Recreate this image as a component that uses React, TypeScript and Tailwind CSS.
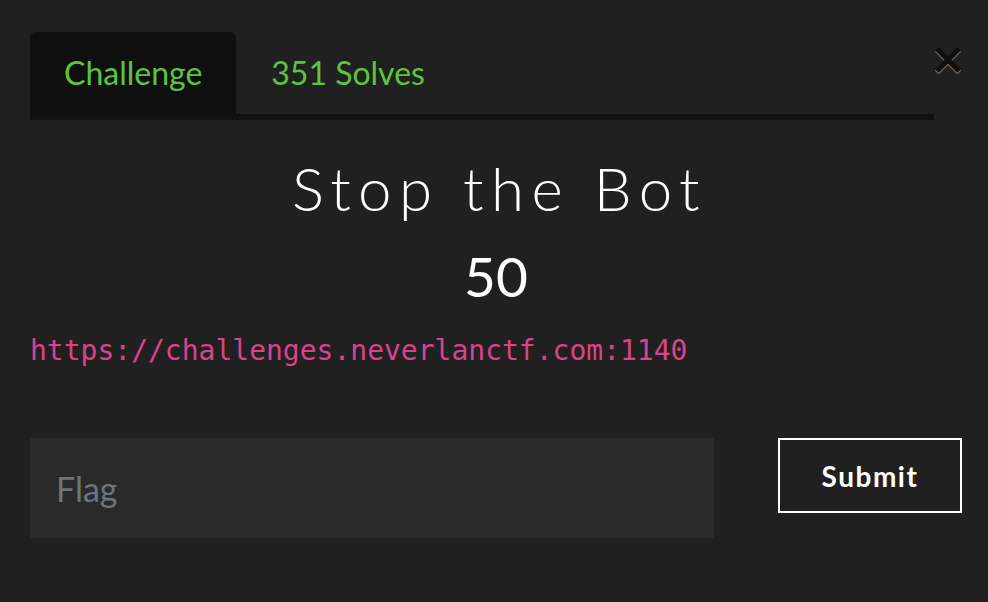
import { useState } from "react";

export default function App() {
  const [tab, setTab] = useState("challenge");
  const [flag, setFlag] = useState("");

  return (
    <div className="relative w-[988px] h-[602px] bg-[#202020] font-['Lato','Open_Sans',sans-serif] overflow-hidden">
      {/* close */}
      <button className="absolute left-[932px] top-[39px] w-[32px] h-[40px] flex items-center justify-center text-[44px] leading-none font-bold font-['DejaVu_Sans',sans-serif] text-black opacity-50 [text-shadow:0_1px_0_#fff]">
        ×
      </button>

      <div className="pt-[32px] pl-[30px] pr-[26px]">
        {/* tabs */}
        <div className="flex w-[904px] border-b-[6px] border-[#111111]">
          <button
            onClick={() => setTab("challenge")}
            className={`h-[82px] px-[34px] rounded-t-[6px] text-[32px] text-[#5cc43f] ${
              tab === "challenge" ? "bg-[#0f0f0f]" : ""
            }`}
          >
            Challenge
          </button>
          <button
            onClick={() => setTab("solves")}
            className={`h-[82px] px-[35px] rounded-t-[6px] text-[32px] text-[#5cc43f] ${
              tab === "solves" ? "bg-[#0f0f0f]" : ""
            }`}
          >
            351 Solves
          </button>
        </div>

        {/* challenge */}
        <div className="flex flex-col items-center pt-[32px] text-white">
          <h2 className="text-[60px] leading-[72px] font-light tracking-[7.4px] pl-[7px]">Stop the Bot</h2>
          <h3 className="text-[55px] leading-[64px] mt-[20px]">50</h3>
        </div>
        <p className="mt-[26px] font-['DejaVu_Sans_Mono',monospace] text-[28px] leading-[34px] text-[#d8448a]">
          https://challenges.neverlanctf.com:1140
        </p>

        <div className="flex items-start justify-between mt-[70px]">
          <input
            value={flag}
            onChange={(e) => setFlag(e.target.value)}
            placeholder="Flag"
            className="w-[684px] h-[100px] bg-[#2a2a2a] px-[26px] text-[34px] text-white placeholder:text-[#6c757d] outline-none"
          />
          <button className="w-[184px] h-[75px] border-2 border-white text-white text-[28px] font-bold tracking-[1.5px]">
            Submit
          </button>
        </div>
      </div>
    </div>
  );
}
